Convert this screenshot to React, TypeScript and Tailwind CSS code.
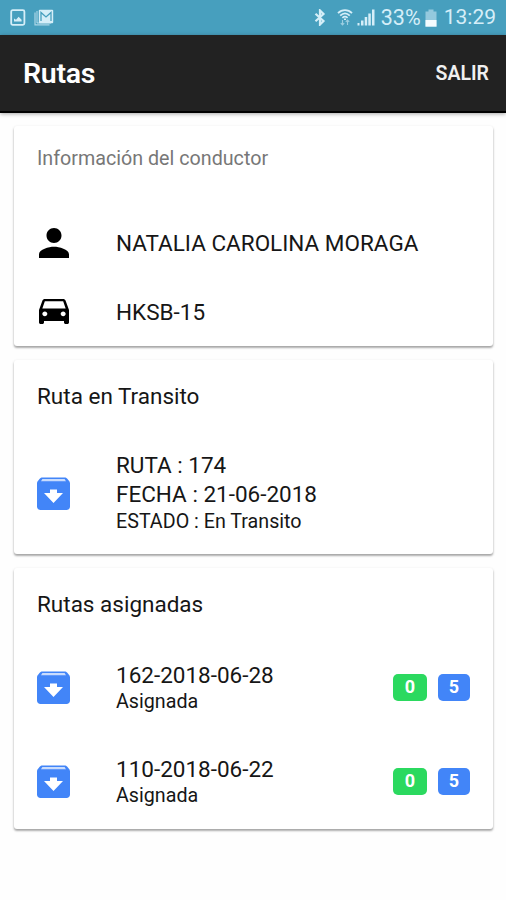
import { ReactNode } from 'react';

interface Ruta {
  codigo: string;
  estado: string;
  entregados: number;
  pendientes: number;
}

const rutasAsignadas: Ruta[] = [
  { codigo: '162-2018-06-28', estado: 'Asignada', entregados: 0, pendientes: 5 },
  { codigo: '110-2018-06-22', estado: 'Asignada', entregados: 0, pendientes: 5 }
];

const PersonIcon = () => (
  <svg className="w-[30px] h-[30px] text-black" viewBox="4 4 16 16" fill="currentColor">
    <path d="M12 12c2.21 0 4-1.79 4-4s-1.79-4-4-4-4 1.79-4 4 1.79 4 4 4zm0 2c-2.67 0-8 1.34-8 4v2h16v-2c0-2.66-5.33-4-8-4z" />
  </svg>
);

const CarIcon = () => (
  <svg className="w-[30px] h-[25px] text-black" viewBox="3 5 18 16" preserveAspectRatio="none" fill="currentColor">
    <path d="M18.92 6.01C18.72 5.42 18.16 5 17.5 5h-11c-.66 0-1.21.42-1.42 1.01L3 12v8c0 .55.45 1 1 1h1c.55 0 1-.45 1-1v-1h12v1c0 .55.45 1 1 1h1c.55 0 1-.45 1-1v-8l-2.08-5.99zM6.5 16c-.83 0-1.5-.67-1.5-1.5S5.67 13 6.5 13s1.5.67 1.5 1.5S7.33 16 6.5 16zm11 0c-.83 0-1.5-.67-1.5-1.5s.67-1.5 1.5-1.5 1.5.67 1.5 1.5-.67 1.5-1.5 1.5zM5 11l1.5-4.5h11L19 11H5z" />
  </svg>
);

const ArchiveIcon = () => (
  <svg className="w-[33px] h-[33px]" viewBox="0 0 33 33">
    <path
      d="M5.5.5h22c1.200 0 2 .4 2.800 1.300l1.600 2c.7.8 1.100 1.500 1.100 2.700V29.500c0 2-1.500 3.500-3.500 3.500h-26C1.500 33 0 31.500 0 29.500v-23c0-1.200.4-1.900 1.100-2.700l1.600-2C3.500.9 4.300.5 5.500.5z"
      fill="#4285f8"
    />
    <path d="M5.400 2h22.200l1.400 2.200H4z" fill="#c9dcfd" />
    <path d="M13 12.500h7V16h6l-9.500 10L7 16h6z" fill="#fff" />
  </svg>
);

const StatusBar = () => (
  <div className="h-[35px] shrink-0 bg-[#479fbe] text-[#d5eef8] flex items-center justify-between px-[10px]">
    <div className="flex items-center gap-2">
      <svg className="w-4 h-[17px]" viewBox="0 0 16 17">
        <rect x="1.2" y="1.2" width="13.2" height="14.6" rx="1.5" fill="none" stroke="currentColor" strokeWidth="1.8" />
        <path d="M4 12.5v-3l2 1.2 2.600-3 3 3v1.800z" fill="currentColor" />
      </svg>
      <svg className="w-5 h-[17px]" viewBox="0 0 20 17">
        <path d="M1 3.5v12.300h14.500" fill="none" stroke="currentColor" strokeWidth="1.2" opacity="0.7" />
        <path d="M3 2v12h14" fill="none" stroke="currentColor" strokeWidth="1" opacity="0.8" />
        <rect x="4.8" y="0.8" width="14.4" height="13.4" rx="1" fill="currentColor" />
        <path d="M7 12V3.500l5 4.500 5-4.500V12" fill="none" stroke="#479fbe" strokeWidth="1.3" />
      </svg>
    </div>
    <div className="flex items-center">
      <svg className="w-3 h-[17px] mr-[11px]" viewBox="0 0 12 17">
        <path d="M1.5 4.8l8 7.2L6 15.500v-14L9.500 5l-8 7.200" fill="none" stroke="currentColor" strokeWidth="2.2" />
      </svg>
      <svg className="w-4 h-[17px] mr-1" viewBox="0 0 16 17" fill="none" stroke="currentColor">
        <path d="M1 4.200c4-4 10-4 14 0M3.200 6.600c3-2.800 6.600-2.800 9.600 0M5.400 8.800c1.800-1.600 3.400-1.600 5.200 0" strokeWidth="1.8" />
        <path d="M8 9.500V11" strokeWidth="2" />
        <path d="M5.500 11v5M3.800 14.200L5.500 16l1.700-1.800M10.500 16v-5M8.800 12.800l1.700-1.800 1.700 1.800" strokeWidth="1.1" opacity="0.6" />
      </svg>
      <svg className="w-[18px] h-[17px] mr-[6px]" viewBox="0 0 18 17" fill="currentColor">
        <path d="M.5 14h2v2.500h-2zM4 11.500h2.500v5H4zM7.700 8h2.500v8.500H7.700zM11.300 4.500h2.500v12h-2.500zM15 .5h2.500v16H15z" />
      </svg>
      <span className="text-[21.5px] leading-none mr-[4px]">33%</span>
      <svg className="w-3 h-[18px] mr-[7px]" viewBox="0 0 12 18">
        <path d="M3.500.5h5v2h3V18H.5V2.500h3z" fill="#94c9de" />
        <path d="M.5 11h11v6.500H.5z" fill="#f4fbfe" />
      </svg>
      <span className="text-[21px] leading-none">13:29</span>
    </div>
  </div>
);

const Card = ({ children, className }: { children: ReactNode; className: string }) => (
  <section
    className={`bg-white rounded-[3px] flex flex-col shadow-[0_2px_2px_rgba(0,0,0,0.26),0_1px_3px_rgba(0,0,0,0.16)] ${className}`}
  >
    {children}
  </section>
);

const Item = ({ icon, children, className }: { icon: ReactNode; children: ReactNode; className: string }) => (
  <div className={`flex items-center px-[23px] ${className}`}>
    <div className="w-[33px] mr-[46px] flex justify-center">{icon}</div>
    {children}
  </div>
);

const Badge = ({ value, className }: { value: number; className: string }) => (
  <span className={`h-[27px] rounded-[5px] text-white text-[18px] leading-[25px] font-bold text-center ${className}`}>
    {value}
  </span>
);

export default function App() {
  return (
    <div className="w-full h-[900px] overflow-hidden bg-[#fefefe] flex flex-col font-[Roboto,sans-serif] text-[#161616]">
      <StatusBar />

      <header className="h-[78px] shrink-0 bg-[#222] flex items-center justify-between pl-[23px] pr-[17px] text-white border-b-2 border-black shadow-[0_1px_4px_rgba(0,0,0,0.35)]">
        <h1 className="pt-[2px] text-[28.5px] font-semibold tracking-[-0.3px]">Rutas</h1>
        <button className="pt-[2px] text-[19.5px] font-semibold text-[#f0f0f0]">SALIR</button>
      </header>

      <main className="pt-[13px] pl-[14px] pr-[13px] flex flex-col gap-[14px]">
        <Card className="h-[220px]">
          <h2 className="h-[83px] pt-[19px] pl-[23px] text-[19.7px] leading-7 text-[#777]">Información del conductor</h2>
          <Item icon={<PersonIcon />} className="h-[68px]">
            <span className="pt-[2px] text-[22.5px]">NATALIA CAROLINA MORAGA</span>
          </Item>
          <Item icon={<CarIcon />} className="h-[69px]">
            <span className="pt-[2px] text-[22.5px]">HKSB-15</span>
          </Item>
        </Card>

        <Card className="h-[194px]">
          <h2 className="h-[72px] pt-[22px] pl-[23px] text-[22.5px] leading-7">Ruta en Transito</h2>
          <Item icon={<ArchiveIcon />} className="h-[122px]">
            <div className="pb-[3px]">
              <p className="text-[22.5px] leading-[29px]">RUTA : 174</p>
              <p className="text-[22.5px] leading-[29px]">FECHA : 21-06-2018</p>
              <p className="pt-px text-[19.7px] leading-[23px]">ESTADO : En Transito</p>
            </div>
          </Item>
        </Card>

        <Card className="h-[261px]">
          <h2 className="h-[72px] pt-[22px] pl-[23px] text-[22.5px] leading-7">Rutas asignadas</h2>
          {rutasAsignadas.map((ruta) => (
            <Item key={ruta.codigo} icon={<ArchiveIcon />} className="h-[94px]">
              <div className="flex-1 pb-px">
                <p className="text-[22.5px] leading-[29px]">{ruta.codigo}</p>
                <p className="text-[19.7px] leading-[23px]">{ruta.estado}</p>
              </div>
              <Badge value={ruta.entregados} className="w-[34px] mr-[11px] bg-[#2bd95f]" />
              <Badge value={ruta.pendientes} className="w-[32px] bg-[#4285f8]" />
            </Item>
          ))}
        </Card>
      </main>
    </div>
  );
}
